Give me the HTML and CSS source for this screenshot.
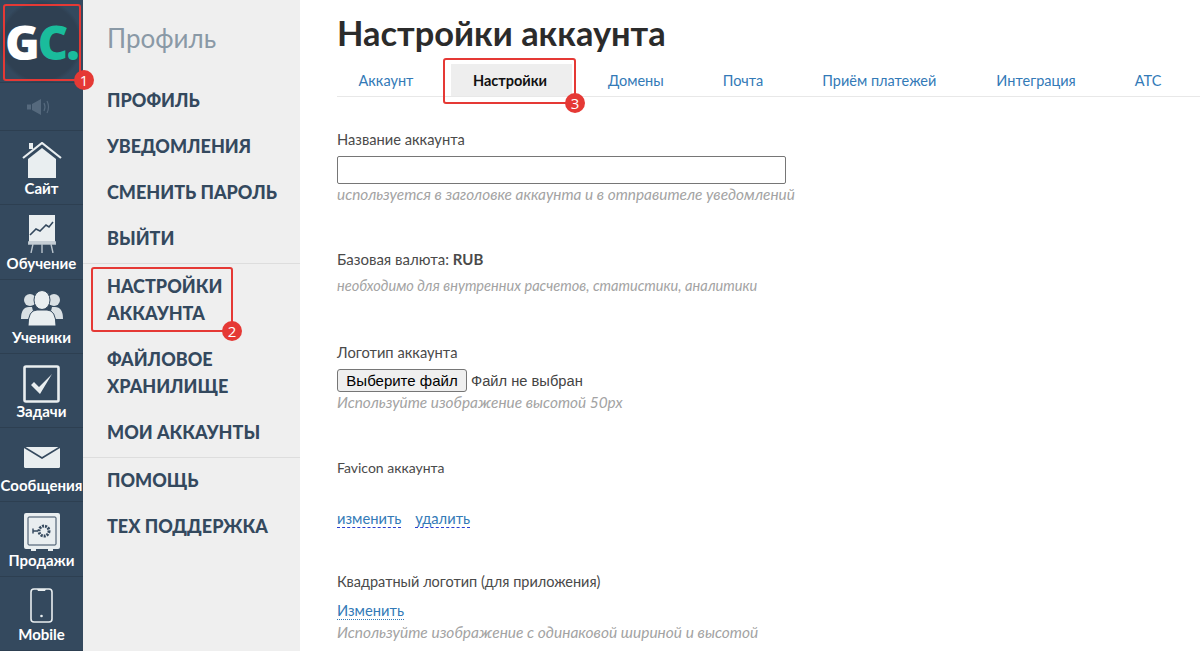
FILE: index.html
```html
<!DOCTYPE html>
<html>
<head>
  <title>Настройки аккаунта</title>
  <link rel="stylesheet" href="styles.css">
</head>
<body>
  <div class="page">
    <!-- left icon rail -->
    <nav class="rail">
      <div class="rail-logo">
        <span class="logo-g">G</span><span class="logo-c">C.</span>
      </div>
      <div class="rail-sound">
        <svg width="24" height="18" viewBox="0 0 24 18"><path d="M0 6.500h4v5H0zM5 6l9-5v16l-9-5z" fill="#55697d"/><path d="M17 5q2 4 0 8M20 3q3 6 0 12" fill="none" stroke="#55697d" stroke-width="1.2"/></svg>
      </div>
      <a class="rail-item">
        <svg class="icon-home" width="40" height="36" viewBox="0 0 40 36"><path d="M7 1h4v6H7z" fill="#e9eef0"/><path d="M1 16L20 1l19 15" fill="none" stroke="#e9eef0" stroke-width="2.2"/><path d="M6 17L20 6l14 11v19H6z" fill="#e9eef0"/></svg>
        <span>Сайт</span>
      </a>
      <a class="rail-item">
        <svg class="icon-chart" width="28" height="38" viewBox="0 0 28 38"><path d="M1 0h26v27H1z" fill="#e9eef0"/><path d="M2 20l6-6 4 2 6-6 3 2 4-5" fill="none" stroke="#34495e" stroke-width="1.6"/><path d="M0 27h28v2H0zM5 29l-2 9M14 29v9M23 29l2 9" stroke="#b9c4cc" stroke-width="1.4" fill="#e9eef0"/></svg>
        <span>Обучение</span>
      </a>
      <a class="rail-item">
        <svg class="icon-users" width="42" height="36" viewBox="0 0 42 36"><circle cx="9" cy="10" r="6" fill="#d9e0e4"/><circle cx="33" cy="10" r="6" fill="#d9e0e4"/><path d="M0 29q0-12 8-12h3l3 12zM42 29q0-12-8-12h-3l-3 12z" fill="#d9e0e4"/><ellipse cx="21" cy="10" rx="8" ry="9.500" fill="#e9eef0" stroke="#34495e"/><path d="M7 36q0-16 9-16h10q9 0 9 16z" fill="#e9eef0" stroke="#34495e"/></svg>
        <span>Ученики</span>
      </a>
      <a class="rail-item">
        <svg class="icon-task" width="37" height="38" viewBox="0 0 37 38"><rect x="1.500" y="1.500" width="34" height="35" rx="1.500" fill="none" stroke="#e9eef0" stroke-width="2.600"/><path d="M8 20l3-3 5 5L29 9l-12 20z" fill="#e9eef0"/></svg>
        <span>Задачи</span>
      </a>
      <a class="rail-item">
        <svg class="icon-mail" width="36" height="21" viewBox="0 0 36 21"><rect width="36" height="21" rx="1.500" fill="#e9eef0"/><path d="M0 0l18 11L36 0" fill="none" stroke="#34495e" stroke-width="1.600"/></svg>
        <span>Сообщения</span>
      </a>
      <a class="rail-item">
        <svg class="icon-safe" width="36" height="38" viewBox="0 0 36 38"><path d="M2 0h32a2 2 0 0 1 2 2v32a2 2 0 0 1-2 2h-5v2h-5v-2H12v2H7v-2H2a2 2 0 0 1-2-2V2a2 2 0 0 1 2-2z" fill="#e9eef0"/><rect x="4" y="4" width="28" height="28" rx="1" fill="none" stroke="#34495e" stroke-width="1"/><circle cx="20" cy="18" r="5" fill="none" stroke="#34495e" stroke-width="3" stroke-dasharray="2 1"/><path d="M9 18h5M9 15.500v5" stroke="#34495e" stroke-width="1.400"/></svg>
        <span>Продажи</span>
      </a>
      <a class="rail-item">
        <svg class="icon-phone" width="23" height="35" viewBox="0 0 23 35"><rect x="1" y="1" width="21" height="33" rx="3" fill="none" stroke="#e9eef0" stroke-width="1.600"/><path d="M7 1h9l-1 2H8z" fill="#e9eef0"/><circle cx="11.500" cy="28" r="1.300" fill="#e9eef0"/></svg>
        <span>Mobile</span>
      </a>
    </nav>

    <!-- profile menu -->
    <aside class="side">
      <div class="side-title">Профиль</div>
      <ul class="side-menu">
        <li>Профиль</li>
        <li>Уведомления</li>
        <li>Сменить пароль</li>
        <li class="last">Выйти</li>
      </ul>
      <ul class="side-menu">
        <li>Настройки<br>аккаунта</li>
        <li>Файловое<br>хранилище</li>
        <li class="last">Мои аккаунты</li>
      </ul>
      <ul class="side-menu">
        <li>Помощь</li>
        <li>Тех поддержка</li>
      </ul>
    </aside>

    <main class="content">
      <h1>Настройки аккаунта</h1>
      <div class="tabs">
        <a class="tab tab-1">Аккаунт</a>
        <a class="tab tab-active">Настройки</a>
        <a class="tab tab-3">Домены</a>
        <a class="tab tab-4">Почта</a>
        <a class="tab tab-5">Приём платежей</a>
        <a class="tab tab-6">Интеграция</a>
        <a class="tab tab-7">АТС</a>
      </div>

      <section class="field field-name">
        <label>Название аккаунта</label>
        <input type="text" class="text-input">
        <div class="hint">используется в заголовке аккаунта и в отправителе уведомлений</div>
      </section>

      <section class="field field-currency">
        <div class="label-line">Базовая валюта: <b>RUB</b></div>
        <div class="hint hint-currency">необходимо для внутренних расчетов, статистики, аналитики</div>
      </section>

      <section class="field field-logo">
        <label>Логотип аккаунта</label>
        <div class="file-row">
          <button type="button" class="file-btn">Выберите файл</button>
          <span class="file-name">Файл не выбран</span>
        </div>
        <div class="hint">Используйте изображение высотой 50px</div>
      </section>

      <section class="field field-favicon">
        <label>Favicon аккаунта</label>
        <div class="links">
          <a class="dash-link">изменить</a>
          <a class="dash-link">удалить</a>
        </div>
      </section>

      <section class="field field-square">
        <label>Квадратный логотип (для приложения)</label>
        <a class="dot-link">Изменить</a>
        <div class="hint">Используйте изображение с одинаковой шириной и высотой</div>
      </section>
    </main>

    <!-- red annotations drawn over the screenshot -->
    <div class="mark mark-1"><span class="badge">1</span></div>
    <div class="mark mark-2"><span class="badge">2</span></div>
    <div class="mark mark-3"><span class="badge">3</span></div>
  </div>
</body>
</html>
```

FILE: styles.css
```css
html, body {
    margin: 0;
    padding: 0;
    height: 651px;
    overflow: hidden;
}

body {
    font-family: 'Lato', 'Open Sans', sans-serif;
    background-color: #ffffff;
    color: #4a4a4a;
}

.page {
    position: relative;
    display: flex;
    width: 1200px;
    height: 651px;
    overflow: hidden;
}

/* rail */
.rail {
    width: 83px;
    flex: none;
    background-color: #34495e;
}

.rail-logo {
    height: 83px;
    box-sizing: border-box;
    display: flex;
    align-items: center;
    justify-content: center;
    padding-top: 2px;
    background: radial-gradient(circle at 41px 42px, #2f4052 0, #2f4052 38px, #34495e 42px);
    border-bottom: 1px solid #2d3f51;
    font-family: 'Open Sans', sans-serif;
    font-weight: 800;
    font-size: 47px;
    letter-spacing: -2px;
}

.logo-g {
    color: #ffffff;
}

.logo-c {
    color: #1abc9c;
}

.rail-sound {
    height: 48px;
    box-sizing: border-box;
    display: flex;
    align-items: center;
    justify-content: center;
    padding-right: 5px;
    border-bottom: 1px solid #2d3f51;
}

.rail-item {
    height: 74.300px;
    box-sizing: border-box;
    display: flex;
    flex-direction: column;
    align-items: center;
    justify-content: flex-end;
    padding-bottom: 7px;
    border-bottom: 1px solid #2d3f51;
    color: #ffffff;
    font-size: 15px;
    font-weight: 700;
    line-height: 17px;
    white-space: nowrap;
}

.rail-item svg {
    display: block;
}

.icon-home {
    margin-bottom: 2px;
}

.icon-chart {
    margin-bottom: 2px;
}

.icon-users {
    margin-bottom: 3px;
}

.icon-task {
    margin-bottom: 0;
}

.icon-mail {
    margin-bottom: 9px;
}

.icon-safe {
    margin-bottom: 1px;
}

.icon-phone {
    margin-bottom: 3px;
}

/* side menu */
.side {
    width: 217px;
    flex: none;
    background-color: #efefef;
}

.side-title {
    padding: 22px 0 0 24px;
    height: 56px;
    font-size: 26px;
    line-height: 32px;
    color: #8a99a6;
}

.side-menu {
    list-style: none;
    margin: 0;
    padding: 0 0 0 24px;
    border-bottom: 1px solid #dddddd;
}

.side-menu:last-child {
    border-bottom: none;
}

.side-menu li {
    padding: 9px 0 10px;
    font-size: 18px;
    font-weight: 900;
    line-height: 27px;
    text-transform: uppercase;
    color: #34495e;
}

.side-menu li.last {
    padding-bottom: 11px;
}

/* main */
.content {
    flex: 1;
    padding: 0 0 0 37px;
    font-size: 14.700px;
}

h1 {
    margin: 13px 0 0;
    font-size: 34.400px;
    line-height: 40px;
    font-weight: 700;
    color: #2b2b2b;
}

.tabs {
    display: flex;
    height: 44px;
    padding-top: 11px;
    box-sizing: border-box;
    border-bottom: 1px solid #e8e8e8;
    align-items: stretch;
    font-size: 14.500px;
}

.tab {
    display: flex;
    align-items: center;
    justify-content: center;
    height: 32px;
    color: #337ab7;
}

.tab-1 {
    width: 98px;
}

.tab-active {
    box-sizing: border-box;
    width: 121px;
    margin-left: 16px;
    padding-right: 3px;
    background-color: #eeeeee;
    color: #111111;
    font-weight: 700;
}

.tab-3 {
    margin-left: 36px;
}

.tab-4 {
    margin-left: 59px;
}

.tab-5 {
    margin-left: 59px;
}

.tab-6 {
    margin-left: 60px;
}

.tab-7 {
    margin-left: 59px;
}

.field label,
.label-line {
    display: block;
    line-height: 20px;
    color: #4a4a4a;
}

.label-line {
    font-size: 15px;
}

.field-name {
    padding-top: 32px;
}

.text-input {
    display: block;
    box-sizing: border-box;
    width: 449px;
    height: 28px;
    margin-top: 7px;
    padding: 0 6px;
    border: 1px solid #767676;
    border-radius: 2px;
    background-color: #ffffff;
}

.hint {
    line-height: 20px;
    font-size: 15.400px;
    font-style: italic;
    color: #a3a3a3;
}

.field-currency {
    padding-top: 45px;
}

.hint-currency {
    margin-top: 7px;
    font-size: 14.600px;
}

.field-logo {
    padding-top: 46px;
}

.file-row {
    display: flex;
    align-items: center;
    gap: 4px;
    margin-top: 7px;
}

.file-btn {
    box-sizing: border-box;
    height: 23px;
    width: 130px;
    padding: 0;
    border: 1px solid #767676;
    border-radius: 3px;
    background-color: #efefef;
    color: #000000;
    font-family: 'Liberation Sans', sans-serif;
    font-size: 15px;
}

.file-name {
    font-family: 'Liberation Sans', sans-serif;
    font-size: 14.700px;
    color: #444444;
}

.field-favicon {
    padding-top: 46px;
}

.field-favicon label {
    font-size: 14px;
}

.links {
    display: flex;
    gap: 14px;
    margin-top: 31px;
}

.dash-link {
    color: #337ab7;
    line-height: 18px;
    border-bottom: 1px dashed #2a3fd0;
}

.field-square {
    padding-top: 44px;
}

.field-square label {
    font-size: 14.500px;
}

.dot-link {
    display: inline-block;
    margin-top: 10px;
    color: #337ab7;
    line-height: 17px;
    border-bottom: 1px dotted #337ab7;
}

.field-square .hint {
    margin-top: 2px;
    font-size: 15.500px;
}

/* annotations */
.mark {
    position: absolute;
    box-sizing: border-box;
    border: 2px solid #e53935;
    border-radius: 3px;
}

.mark-1 {
    left: 3px;
    top: 4px;
    width: 78px;
    height: 77px;
}

.mark-2 {
    left: 91px;
    top: 267px;
    width: 142px;
    height: 65px;
}

.mark-3 {
    left: 443px;
    top: 58px;
    width: 133px;
    height: 46px;
}

.badge {
    position: absolute;
    right: -11px;
    bottom: -11px;
    width: 20px;
    height: 20px;
    border-radius: 50%;
    background-color: #e53935;
    color: #ffffff;
    font-family: 'Open Sans', sans-serif;
    font-size: 15px;
    line-height: 20px;
    text-align: center;
}

.mark-1 .badge {
    right: -15px;
}
```
